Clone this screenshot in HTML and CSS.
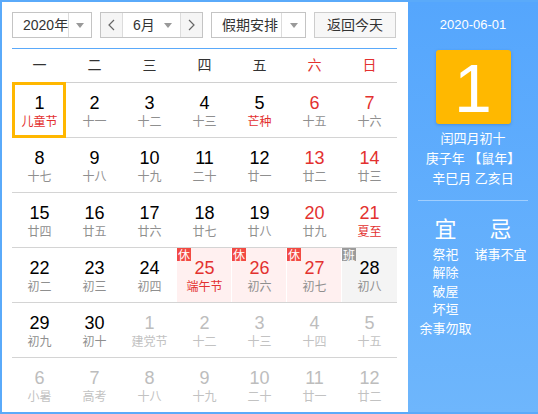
FILE: index.html
```html
<!DOCTYPE html>
<html lang="zh-CN">
<head>
<meta charset="utf-8">
<title>万年历</title>
<link rel="stylesheet" href="styles.css">
</head>
<body>
<div class="cal">
  <div class="main">
    <div class="toolbar">
      <div class="sel sel-year">
        <span class="sel-text">2020年</span>
        <span class="sel-arrow"><i class="tri"></i></span>
      </div>
      <div class="sel sel-month">
        <span class="nav nav-prev"><svg width="7" height="12" viewBox="0 0 7 12"><polyline points="6,1 1,6 6,11" fill="none" stroke="#666" stroke-width="1.2"/></svg></span>
        <span class="month-text">6月<i class="tri"></i></span>
        <span class="nav nav-next"><svg width="7" height="12" viewBox="0 0 7 12"><polyline points="1,1 6,6 1,11" fill="none" stroke="#666" stroke-width="1.2"/></svg></span>
      </div>
      <div class="sel sel-holiday">
        <span class="sel-text">假期安排</span>
        <span class="sel-arrow"><i class="tri"></i></span>
      </div>
      <div class="btn-today">返回今天</div>
    </div>
    <div class="weekhead">
      <span>一</span><span>二</span><span>三</span><span>四</span><span>五</span><span class="red">六</span><span class="red">日</span>
    </div>
    <div class="weeks">
      <div class="week">
        <div class="day selected"><div class="num">1</div><div class="lunar fest">儿童节</div></div>
        <div class="day"><div class="num">2</div><div class="lunar">十一</div></div>
        <div class="day"><div class="num">3</div><div class="lunar">十二</div></div>
        <div class="day"><div class="num">4</div><div class="lunar">十三</div></div>
        <div class="day"><div class="num">5</div><div class="lunar fest">芒种</div></div>
        <div class="day weekend"><div class="num">6</div><div class="lunar">十五</div></div>
        <div class="day weekend"><div class="num">7</div><div class="lunar">十六</div></div>
      </div>
      <div class="week">
        <div class="day"><div class="num">8</div><div class="lunar">十七</div></div>
        <div class="day"><div class="num">9</div><div class="lunar">十八</div></div>
        <div class="day"><div class="num">10</div><div class="lunar">十九</div></div>
        <div class="day"><div class="num">11</div><div class="lunar">二十</div></div>
        <div class="day"><div class="num">12</div><div class="lunar">廿一</div></div>
        <div class="day weekend"><div class="num">13</div><div class="lunar">廿二</div></div>
        <div class="day weekend"><div class="num">14</div><div class="lunar">廿三</div></div>
      </div>
      <div class="week">
        <div class="day"><div class="num">15</div><div class="lunar">廿四</div></div>
        <div class="day"><div class="num">16</div><div class="lunar">廿五</div></div>
        <div class="day"><div class="num">17</div><div class="lunar">廿六</div></div>
        <div class="day"><div class="num">18</div><div class="lunar">廿七</div></div>
        <div class="day"><div class="num">19</div><div class="lunar">廿八</div></div>
        <div class="day weekend"><div class="num">20</div><div class="lunar">廿九</div></div>
        <div class="day weekend"><div class="num">21</div><div class="lunar fest">夏至</div></div>
      </div>
      <div class="week">
        <div class="day"><div class="num">22</div><div class="lunar">初二</div></div>
        <div class="day"><div class="num">23</div><div class="lunar">初三</div></div>
        <div class="day"><div class="num">24</div><div class="lunar">初四</div></div>
        <div class="day rest"><span class="badge">休</span><div class="num">25</div><div class="lunar fest">端午节</div></div>
        <div class="day rest"><span class="badge">休</span><div class="num">26</div><div class="lunar">初六</div></div>
        <div class="day rest"><span class="badge">休</span><div class="num">27</div><div class="lunar">初七</div></div>
        <div class="day work"><span class="badge">班</span><div class="num">28</div><div class="lunar">初八</div></div>
      </div>
      <div class="week">
        <div class="day"><div class="num">29</div><div class="lunar">初九</div></div>
        <div class="day"><div class="num">30</div><div class="lunar">初十</div></div>
        <div class="day other"><div class="num">1</div><div class="lunar">建党节</div></div>
        <div class="day other"><div class="num">2</div><div class="lunar">十二</div></div>
        <div class="day other"><div class="num">3</div><div class="lunar">十三</div></div>
        <div class="day other"><div class="num">4</div><div class="lunar">十四</div></div>
        <div class="day other"><div class="num">5</div><div class="lunar">十五</div></div>
      </div>
      <div class="week">
        <div class="day other"><div class="num">6</div><div class="lunar">小暑</div></div>
        <div class="day other"><div class="num">7</div><div class="lunar">高考</div></div>
        <div class="day other"><div class="num">8</div><div class="lunar">十八</div></div>
        <div class="day other"><div class="num">9</div><div class="lunar">十九</div></div>
        <div class="day other"><div class="num">10</div><div class="lunar">二十</div></div>
        <div class="day other"><div class="num">11</div><div class="lunar">廿一</div></div>
        <div class="day other"><div class="num">12</div><div class="lunar">廿二</div></div>
      </div>
    </div>
  </div>
  <div class="side">
    <div class="date">2020-06-01</div>
    <div class="daybox">1</div>
    <div class="lunar-info">
      <div>闰四月初十</div>
      <div>庚子年 【鼠年】</div>
      <div>辛巳月 乙亥日</div>
    </div>
    <div class="sep"></div>
    <div class="yiji">
      <div class="yj-col">
        <div class="yj-head">宜</div>
        <div>祭祀</div>
        <div>解除</div>
        <div>破屋</div>
        <div>坏垣</div>
        <div>余事勿取</div>
      </div>
      <div class="yj-col">
        <div class="yj-head">忌</div>
        <div>诸事不宜</div>
      </div>
    </div>
  </div>
</div>
</body>
</html>
```

FILE: styles.css
```css
* { box-sizing: border-box; }

body {
  margin: 0;
  font-family: "Liberation Sans", "Noto Sans CJK SC", sans-serif;
  background: #fff;
}

.cal {
  width: 538px;
  height: 414px;
  border: 2px solid #5aaafa;
  border-right: 0;
  display: flex;
  background: #fff;
}

.main {
  width: 406px;
  padding: 10px 11px 0 10px;
}

.toolbar {
  display: flex;
  gap: 8px;
  height: 26px;
  font-size: 14px;
  color: #333;
  margin-bottom: 10px;
}

.sel {
  display: flex;
  border: 1px solid #c4c4c4;
  background: #fff;
  height: 26px;
}

.sel-text {
  flex: 1;
  padding-left: 10px;
  line-height: 24px;
  white-space: nowrap;
}

.sel-arrow {
  width: 24px;
  border-left: 1px solid #dcdcdc;
  display: flex;
  align-items: center;
  justify-content: center;
}

.tri {
  display: inline-block;
  width: 0;
  height: 0;
  border-left: 4px solid transparent;
  border-right: 4px solid transparent;
  border-top: 5px solid #999;
}

.sel-year { width: 80px; }
.sel-month { width: 103px; }
.sel-holiday { width: 95px; }

.nav {
  width: 22px;
  background: #f5f5f5;
  display: flex;
  align-items: center;
  justify-content: center;
}
.nav-prev { border-right: 1px solid #dcdcdc; }
.nav-next { border-left: 1px solid #dcdcdc; }

.month-text {
  flex: 1;
  display: flex;
  align-items: center;
  justify-content: space-between;
  padding: 0 8px 0 10px;
  line-height: 24px;
}

.btn-today {
  width: 82px;
  height: 26px;
  border: 1px solid #cdcdcd;
  background: #f7f7f7;
  text-align: center;
  line-height: 24px;
}

.weekhead {
  display: grid;
  grid-template-columns: repeat(7, 55px);
  border-top: 1px solid #5aa9fa;
  border-bottom: 1px solid #d0d0d0;
  height: 35px;
  line-height: 33px;
  text-align: center;
  font-size: 14px;
  color: #333;
}

.red { color: #e3312f; }

.week {
  display: grid;
  grid-template-columns: repeat(7, 55px);
  height: 55px;
  border-bottom: 1px solid #d4d4d4;
}
.week:last-child {
  border-bottom: 0;
  height: 54px;
}

.day {
  position: relative;
  text-align: center;
  padding-top: 9px;
}

.num {
  font-size: 18px;
  line-height: 22px;
  color: #000;
}

.lunar {
  font-size: 12px;
  line-height: 16px;
  color: #8f8f8f;
}

.weekend .num { color: #e3312f; }
.lunar.fest { color: #e3312f; }

.other .num { color: #bdbdbd; }
.other .lunar { color: #c2c2c2; }

.selected::after {
  content: "";
  position: absolute;
  top: -1px;
  left: 0;
  right: 1px;
  bottom: -1px;
  border: 3px solid #ffb700;
}

.rest {
  background: #fff0f0;
  box-shadow: inset -1px 0 0 #fff;
}
.rest .num { color: #e3312f; }

.work { background: #f4f4f4; }

.badge {
  position: absolute;
  top: 0;
  left: 0;
  width: 14px;
  height: 13px;
  font-size: 12px;
  line-height: 13px;
  color: #fff;
  background: #f24a43;
  font-family: "Noto Sans CJK SC", sans-serif;
}
.work .badge { background: #9b9b9b; }

.side {
  width: 130px;
  background: linear-gradient(#55a6fd, #6eb6fc);
  color: #fff;
  text-align: center;
  padding-top: 14px;
}

.date {
  font-size: 13px;
  line-height: 18px;
}

.daybox {
  width: 75px;
  height: 74px;
  margin: 16px auto 0;
  background: #ffb800;
  border-radius: 3px;
  box-shadow: 0 1px 3px rgba(0, 60, 140, 0.25);
  font-size: 68px;
  line-height: 76px;
  color: #fff;
}

.lunar-info {
  margin-top: 5px;
  font-size: 13px;
  line-height: 20px;
  white-space: nowrap;
}

.sep {
  margin: 11px 10px 0;
  border-top: 1px solid rgba(255, 255, 255, 0.4);
}

.yiji {
  display: grid;
  grid-template-columns: 55px 55px;
  margin: 0 10px;
  font-size: 13px;
  line-height: 18.4px;
}

.yj-col { white-space: nowrap; }

.yj-head {
  font-size: 22px;
  line-height: 30px;
  margin-top: 14px;
  margin-bottom: 1px;
}
```
